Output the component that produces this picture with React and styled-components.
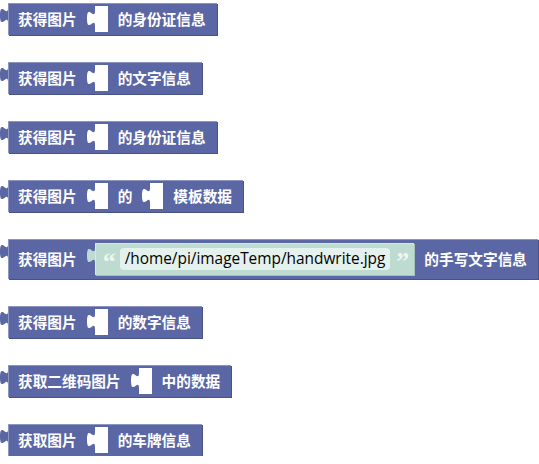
import React from 'react';
import styled, { createGlobalStyle } from 'styled-components';

const BLOCK = '#5b67a5';
const BLOCK_LIGHT = '#8c95c0';
const BLOCK_DARK = '#495284';
const SHADOW = '#bddbd1';
const SHADOW_LIGHT = '#d7e9e3';
const SHADOW_DARK = '#a3c3b8';

const GlobalStyle = createGlobalStyle`
  html, body { margin: 0; padding: 0; background: #ffffff; }
`;

const Workspace = styled.div`
  display: flex;
  flex-direction: column;
  align-items: flex-start;
  gap: 27px;
  padding: 3px 0 0 8px;
`;

const Block = styled.div`
  position: relative;
  display: inline-flex;
  align-items: center;
  box-sizing: border-box;
  height: ${(p) => (p.$tall ? 40 : 32)}px;
  padding: 0 11px 0 10px;
  gap: 10px;
  background: ${BLOCK};
  box-shadow: inset 0 1px 0 ${BLOCK_LIGHT}, inset 1px 0 0 ${BLOCK_LIGHT}, 1px 1px 0 ${BLOCK_DARK};
`;

const TabSvg = styled.svg`
  position: absolute;
  left: -8px;
  top: 5px;
  width: 8px;
  height: 15px;
  overflow: visible;
`;

const Label = styled.span`
  color: #ffffff;
  font-family: "Noto Sans CJK SC", "Noto Sans", sans-serif;
  font-weight: 700;
  font-size: 11pt;
  line-height: 1;
  white-space: nowrap;
`;

const HoleSvg = styled.svg`
  display: block;
  width: 21px;
  height: 26px;
  flex: none;
`;

const StringBlock = styled.div`
  position: relative;
  display: inline-flex;
  align-items: center;
  box-sizing: border-box;
  height: 32px;
  margin-left: 8px;
  padding: 0 7px 0 8px;
  gap: 6px;
  background: ${SHADOW};
  box-shadow: inset 0 1px 0 ${SHADOW_LIGHT}, inset 1px 0 0 ${SHADOW_LIGHT}, 1px 1px 0 ${SHADOW_DARK};
`;

const Quote = styled.span`
  display: inline-block;
  width: 11px;
  color: #eef6f3;
  font-family: "Liberation Serif", "DejaVu Serif", serif;
  font-weight: 700;
  font-size: 26px;
  line-height: 26px;
  height: 26px;
  text-align: center;
  transform: translateY(3px);
`;

const Field = styled.span`
  display: inline-flex;
  align-items: center;
  height: 22px;
  padding: 0 5px;
  border-radius: 4px;
  background: #e5f1ed;
  color: #000000;
  font-family: "Open Sans", "Noto Sans", sans-serif;
  font-size: 15.4px;
  line-height: 1;
  white-space: nowrap;
`;

const Tab = ({ color }) => (
  <TabSvg viewBox="0 0 8 15">
    <path d="M8,0 c0,10 -8,-8 -8,7.5 s8,-2.5 8,7.5 Z" fill={color} />
  </TabSvg>
);

const Hole = () => (
  <HoleSvg viewBox="0 0 21 26">
    <path
      d="M21,0 V26 H8 V20 c0,-10 -8,8 -8,-7.5 s8,2.5 8,-7.5 V0 Z"
      fill="#ffffff"
    />
  </HoleSvg>
);

const TextBlock = ({ value }) => (
  <StringBlock>
    <Tab color={SHADOW} />
    <Quote>“</Quote>
    <Field>{value}</Field>
    <Quote>”</Quote>
  </StringBlock>
);

const blocks = [
  ['获得图片', 'hole', '的身份证信息'],
  ['获得图片', 'hole', '的文字信息'],
  ['获得图片', 'hole', '的身份证信息'],
  ['获得图片', 'hole', '的', 'hole', '模板数据'],
  ['获得图片', { text: '/home/pi/imageTemp/handwrite.jpg' }, '的手写文字信息'],
  ['获得图片', 'hole', '的数字信息'],
  ['获取二维码图片', 'hole', '中的数据'],
  ['获取图片', 'hole', '的车牌信息'],
];

export default function App() {
  return (
    <>
      <GlobalStyle />
      <Workspace>
        {blocks.map((parts, i) => {
          const tall = parts.some((p) => typeof p === 'object');
          return (
            <Block key={i} $tall={tall}>
              <Tab color={BLOCK} />
              {parts.map((p, j) => {
                if (p === 'hole') return <Hole key={j} />;
                if (typeof p === 'object') return <TextBlock key={j} value={p.text} />;
                return <Label key={j}>{p}</Label>;
              })}
            </Block>
          );
        })}
      </Workspace>
    </>
  );
}
